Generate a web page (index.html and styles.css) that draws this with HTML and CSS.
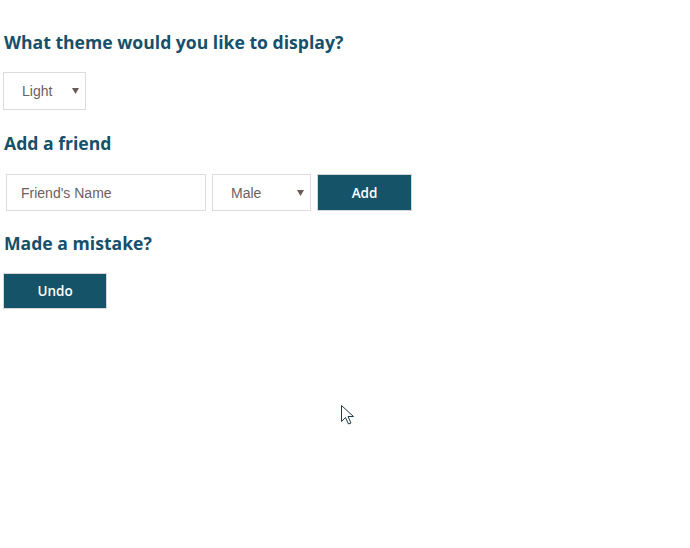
FILE: index.html
```html
<!DOCTYPE html>
<html>
<head>
<meta charset="utf-8">
<title>Settings</title>
<link rel="stylesheet" href="styles.css">
</head>
<body>
<main class="page">
  <h2 class="title t1">What theme would you like to display?</h2>
  <div class="select-wrap theme">
    <select class="select"><option>Light</option><option>Dark</option></select>
    <svg class="arrow" width="7" height="6" viewBox="0 0 7 6"><path d="M0 0H7L3.5 6Z" fill="#6b5a5a"/></svg>
  </div>

  <h2 class="title t2">Add a friend</h2>
  <div class="row">
    <input class="input" type="text" placeholder="Friend's Name">
    <div class="select-wrap gender">
      <select class="select"><option>Male</option><option>Female</option></select>
      <svg class="arrow" width="7" height="6" viewBox="0 0 7 6"><path d="M0 0H7L3.5 6Z" fill="#6b5a5a"/></svg>
    </div>
    <button class="btn add">Add</button>
  </div>

  <h2 class="title t3">Made a mistake?</h2>
  <button class="btn undo">Undo</button>
</main>
<svg class="cursor" width="13" height="20" viewBox="0 0 13 20"><path d="M0.5 0.5V16.5L4.5 12.5L7.5 19L10 18L7 11.5H12.5Z" fill="#fff" stroke="#1d3a4e" stroke-width="1" stroke-linejoin="round"/></svg>
</body>
</html>
```
FILE: styles.css
```css
html, body {
  margin: 0;
  padding: 0;
  background: #fff;
}
.page {
  padding: 0 0 0 3px;
  display: flex;
  flex-direction: column;
  align-items: flex-start;
}
.title {
  font-family: "Open Sans", sans-serif;
  font-weight: 700;
  font-size: 17.6px;
  line-height: 24px;
  color: #16506a;
  margin: 0 0 0 1px;
}
.t1 { margin-top: 30px; }
.t2 { margin-top: 21px; }
.t3 { margin-top: 20px; }
.select-wrap {
  position: relative;
  display: inline-block;
}
.select {
  -webkit-appearance: none;
  appearance: none;
  border: 1px solid #dcdcdc;
  background: #fff;
  border-radius: 0;
  font-family: "Liberation Sans", Arial, sans-serif;
  font-size: 14px;
  color: #6b5f5f;
  outline: none;
  margin: 0;
  box-sizing: border-box;
}
.arrow {
  position: absolute;
  top: 50%;
  margin-top: -3px;
  pointer-events: none;
}
.theme { margin-top: 18px; }
.theme .select {
  width: 83px;
  height: 38px;
  padding: 0 0 0 18px;
}
.theme .arrow { right: 7px; }
.row {
  margin-top: 19px;
  margin-left: 3px;
  display: flex;
  gap: 6px;
  align-items: flex-start;
}
.input {
  width: 200px;
  height: 37px;
  box-sizing: border-box;
  border: 1px solid #dcdcdc;
  padding: 0 0 0 14px;
  font-family: "Liberation Sans", Arial, sans-serif;
  font-size: 14px;
  color: #6b5f5f;
  outline: none;
  margin: 0;
}
.input::placeholder { color: #6b5f5f; opacity: 1; }
.gender .select {
  width: 99px;
  height: 37px;
  padding: 0 0 0 18px;
}
.gender .arrow { right: 7px; }
.btn {
  background: #155369;
  color: #fff;
  border: 1px solid #d6d6d6;
  font-family: "Open Sans", sans-serif;
  font-weight: 600;
  font-size: 13.5px;
  margin: 0;
  box-sizing: border-box;
  cursor: pointer;
  padding: 0;
}
.add {
  width: 95px;
  height: 37px;
}
.undo {
  margin-top: 18px;
  width: 104px;
  height: 36px;
}
.cursor {
  position: absolute;
  left: 341px;
  top: 405px;
}
```
